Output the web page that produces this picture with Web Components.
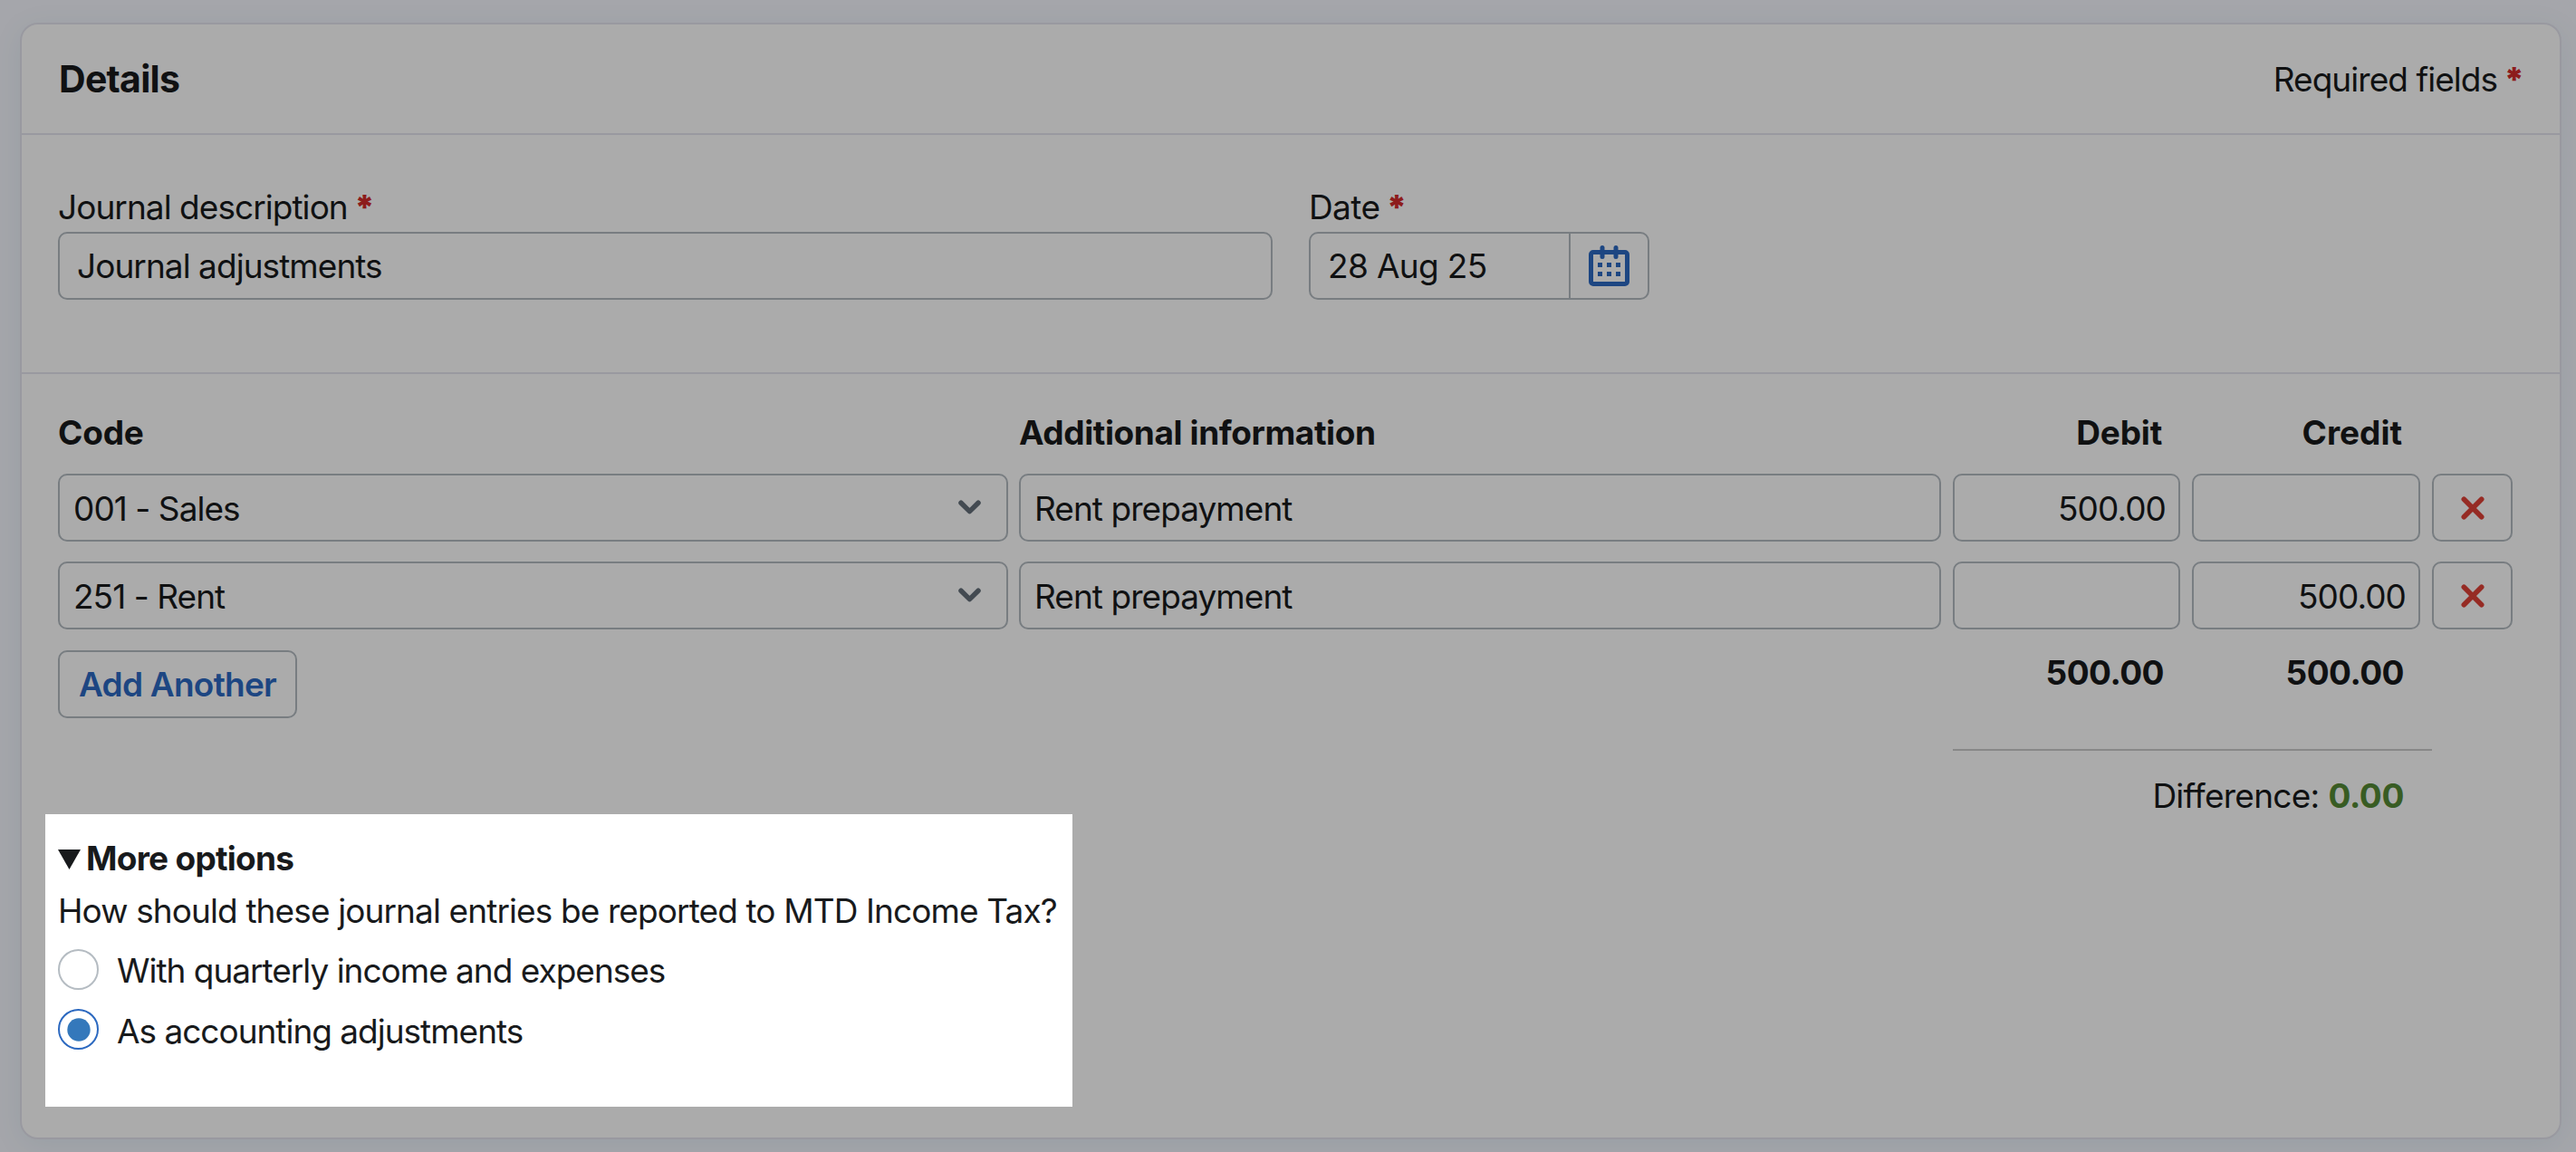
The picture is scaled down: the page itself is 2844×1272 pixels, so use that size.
<!DOCTYPE html>
<html lang="en">
<head>
<meta charset="utf-8">
<title>Journal details</title>
<style>
  body {
    margin: 0;
    height: 1272px;
    overflow: hidden;
    display: flex;
    background: #f6f8ff;
    color: #181a1c;
    font: 400 37px/45px Inter, "Liberation Sans", sans-serif;
    letter-spacing: -0.95px;
    --line: #e5e5ef;
    --field-line: #b3bbc1;
    --blue: #2c69c2;
  }
  journal-card { flex: 1; margin: 25px 16px 14px 22px; }
</style>
</head>
<body>
<journal-card></journal-card>

<script>
// Creates the open shadow root shared by every element on the page
class BaseElement extends HTMLElement {
  constructor() {
    super();
    this.attachShadow({ mode: 'open' });
  }

  connectedCallback() {
    this.shadowRoot.innerHTML = this.template();
  }
}

class RequiredMark extends BaseElement {
  template() {
    return `
      <style>
        :host { color: #d22a2a; font-weight: 900; letter-spacing: 0; }
      </style>*`;
  }
}

class FormField extends BaseElement {
  template() {
    return `
      <style>
        :host { display: block; }
        .label { height: 50px; white-space: nowrap; }
      </style>
      <div class="label"><slot name="label"></slot></div>
      <slot></slot>
    `;
  }
}

// Outlined box used for inputs, selects and buttons
class FieldBox extends BaseElement {
  template() {
    return `
      <style>
        :host {
          box-sizing: border-box;
          display: flex;
          align-items: center;
          height: 75px;
          padding: 0 19px;
          border: 2px solid var(--field-line);
          border-radius: 10px;
          white-space: nowrap;
        }
        :host([kind="cell"]) { padding: 2px 15px 0; }
        :host([kind="amount"]) { padding: 2px 14px 0; justify-content: flex-end; }
        :host([kind="icon"]) { padding: 0; justify-content: center; }
        :host([kind="button"]) {
          width: 264px;
          padding: 0;
          justify-content: center;
          color: var(--blue);
          font-weight: 600;
          letter-spacing: -0.76px;
        }
      </style>
      <slot></slot>
    `;
  }
}

class SelectBox extends BaseElement {
  template() {
    return `
      <style>
        :host { display: block; margin-right: -1px; }
        field-box { justify-content: space-between; }
        svg { margin: -4px 13px 0 0; }
      </style>
      <field-box kind="cell">
        <span><slot></slot></span>
        <svg width="25" height="16" viewBox="0 0 25 16" fill="none" stroke="#646f7a" stroke-width="5.5" stroke-linecap="round" stroke-linejoin="round">
          <path d="M3 3.2 12.5 12.6 22 3.2"/>
        </svg>
      </field-box>
    `;
  }
}

class DateBox extends BaseElement {
  template() {
    return `
      <style>
        :host { display: block; }
        field-box { padding: 0; letter-spacing: -0.65px; }
        .value { flex: 1; padding-left: 19px; }
        .picker {
          display: flex;
          align-items: center;
          justify-content: center;
          align-self: stretch;
          width: 85px;
          border-left: 2px solid var(--field-line);
        }
        svg { fill: var(--blue); }
      </style>
      <field-box>
        <span class="value"><slot></slot></span>
        <span class="picker">
          <svg width="45" height="45" viewBox="0 0 45 45">
            <path fill-rule="evenodd" d="M5 5H40a5 5 0 0 1 5 5V40a5 5 0 0 1-5 5H5a5 5 0 0 1-5-5V10a5 5 0 0 1 5-5ZM5 10V40H40V10Z"/>
            <rect x="12.5" y="0" width="5" height="15" rx="2.5"/>
            <rect x="27.5" y="0" width="5" height="15" rx="2.5"/>
            <path d="M10 19h5v5h-5zM20 19h5v5h-5zM30 19h5v5h-5zM10 29h5v5h-5zM20 29h5v5h-5zM30 29h5v5h-5z"/>
          </svg>
        </span>
      </field-box>
    `;
  }
}

class JournalRow extends BaseElement {
  template() {
    const attr = name => this.getAttribute(name) || '';
    return `
      <style>
        :host {
          display: grid;
          grid-template-columns: 1048px 1018px 251px 252px 89px;
          column-gap: 13px;
        }
      </style>
      <select-box>${attr('code')}</select-box>
      <field-box kind="cell">${attr('info')}</field-box>
      <field-box kind="amount">${attr('debit')}</field-box>
      <field-box kind="amount">${attr('credit')}</field-box>
      <field-box kind="icon">
        <svg width="26" height="26" viewBox="0 0 26 26" fill="none" stroke="#e04037" stroke-width="5.6" stroke-linecap="round">
          <path d="M3.3 3.3 22.7 22.7M22.7 3.3 3.3 22.7"/>
        </svg>
      </field-box>
    `;
  }
}

class JournalTotals extends BaseElement {
  template() {
    return `
      <style>
        :host { display: block; width: 529px; margin-right: 89px; }
        .totals {
          display: grid;
          grid-template-columns: 251px 252px;
          column-gap: 13px;
          height: 109px;
          padding-top: 1px;
          line-height: 49px;
          font-weight: 700;
          letter-spacing: -0.54px;
          text-align: right;
        }
        .totals span { padding-right: 18px; }
        .difference {
          display: flex;
          justify-content: flex-end;
          gap: 10px;
          padding: 27px 31px 0 0;
          border-top: 2px solid #cbcbcb;
          letter-spacing: -0.75px;
        }
        b { color: #548a35; letter-spacing: -0.36px; }
      </style>
      <div class="totals"><span>${this.getAttribute('debit')}</span><span>${this.getAttribute('credit')}</span></div>
      <div class="difference"><span>Difference:</span><b>${this.getAttribute('difference')}</b></div>
    `;
  }
}

class RadioOption extends BaseElement {
  template() {
    return `
      <style>
        :host { display: flex; gap: 20px; height: 45px; letter-spacing: -1.01px; white-space: nowrap; }
        .label { padding-top: 1px; }
        :host([checked]) .label { padding-top: 2px; }
        circle { fill: none; stroke: #b5bcc2; stroke-width: 2; }
        :host([checked]) circle { stroke: #2c69c0; }
        .dot { display: none; }
        :host([checked]) .dot { display: inline; fill: #3478bb; stroke: none; }
      </style>
      <svg width="45" height="45" viewBox="0 0 45 45">
        <circle cx="22.5" cy="22.5" r="21.5"/>
        <circle class="dot" cx="23" cy="23" r="12.7"/>
      </svg>
      <span class="label"><slot></slot></span>
    `;
  }
}

// Highlighted panel: its huge spread shadow dims the rest of the page
class MoreOptions extends BaseElement {
  template() {
    return `
      <style>
        :host {
          box-sizing: border-box;
          display: block;
          position: relative;
          z-index: 1;
          width: 1134px;
          height: 323px;
          padding: 26px 14px 0;
          background: #fff;
          box-shadow: 0 0 0 4000px rgba(0, 0, 0, 0.33);
        }
        .summary {
          display: flex;
          align-items: center;
          gap: 6px;
          margin-bottom: 13px;
          font-weight: 700;
          letter-spacing: -0.74px;
        }
        .summary svg { margin-top: 3px; }
        .question { margin-bottom: 20px; letter-spacing: -0.89px; white-space: nowrap; }
        .options { display: grid; row-gap: 21px; }
      </style>
      <div class="summary">
        <svg width="25" height="22" viewBox="0 0 25 22"><path d="M0 0H25L12.5 22Z" fill="#181a1c"/></svg>
        <span>More options</span>
      </div>
      <div class="question">How should these journal entries be reported to MTD Income Tax?</div>
      <div class="options"><slot></slot></div>
    `;
  }
}

class JournalCard extends BaseElement {
  template() {
    return `
      <style>
        :host {
          box-sizing: border-box;
          display: block;
          border: 2px solid var(--line);
          border-radius: 20px;
          background: #fff;
          box-shadow: 0 6px 32px rgba(0, 105, 130, 0.08);
        }
        header {
          display: flex;
          align-items: center;
          justify-content: space-between;
          height: 120px;
          padding: 0 39px 0 41px;
          border-bottom: 2px solid var(--line);
        }
        h2 { margin: 0; font-size: 41px; font-weight: 700; letter-spacing: -0.73px; }
        .fields {
          display: grid;
          grid-template-columns: 1341px 376px;
          column-gap: 40px;
          padding: 57px 40px 80px;
          border-bottom: 2px solid var(--line);
        }
        .journal { padding: 42px 52px 0 40px; }
        .head {
          display: grid;
          grid-template-columns: 1048px 1018px 251px 252px;
          column-gap: 13px;
          height: 68px;
          font-weight: 700;
          letter-spacing: -0.2px;
        }
        .head span:nth-child(n + 3) { padding-right: 20px; text-align: right; }
        .rows { display: grid; row-gap: 22px; }
        .foot { display: flex; justify-content: space-between; padding-top: 22px; }
        .foot field-box { margin-top: 1px; }
        more-options { margin: 106px 0 0 -14px; }
      </style>
      <header>
        <h2>Details</h2>
        <span>Required fields<required-mark></required-mark></span>
      </header>
      <section class="fields">
        <form-field>
          <span slot="label">Journal description<required-mark></required-mark></span>
          <field-box>Journal adjustments</field-box>
        </form-field>
        <form-field>
          <span slot="label" style="letter-spacing: -0.6px">Date<required-mark></required-mark></span>
          <date-box>28 Aug 25</date-box>
        </form-field>
      </section>
      <section class="journal">
        <div class="head">
          <span>Code</span>
          <span style="letter-spacing: -0.41px">Additional information</span>
          <span>Debit</span>
          <span style="letter-spacing: 0">Credit</span>
        </div>
        <div class="rows">
          <journal-row code="001 - Sales" info="Rent prepayment" debit="500.00"></journal-row>
          <journal-row code="251 - Rent" info="Rent prepayment" credit="500.00"></journal-row>
        </div>
        <div class="foot">
          <div>
            <field-box kind="button">Add Another</field-box>
            <more-options>
              <radio-option>With quarterly income and expenses</radio-option>
              <radio-option checked>As accounting adjustments</radio-option>
            </more-options>
          </div>
          <journal-totals debit="500.00" credit="500.00" difference="0.00"></journal-totals>
        </div>
      </section>
    `;
  }
}

customElements.define('required-mark', RequiredMark);
customElements.define('form-field', FormField);
customElements.define('field-box', FieldBox);
customElements.define('select-box', SelectBox);
customElements.define('date-box', DateBox);
customElements.define('journal-row', JournalRow);
customElements.define('journal-totals', JournalTotals);
customElements.define('radio-option', RadioOption);
customElements.define('more-options', MoreOptions);
customElements.define('journal-card', JournalCard);
</script>
</body>
</html>
